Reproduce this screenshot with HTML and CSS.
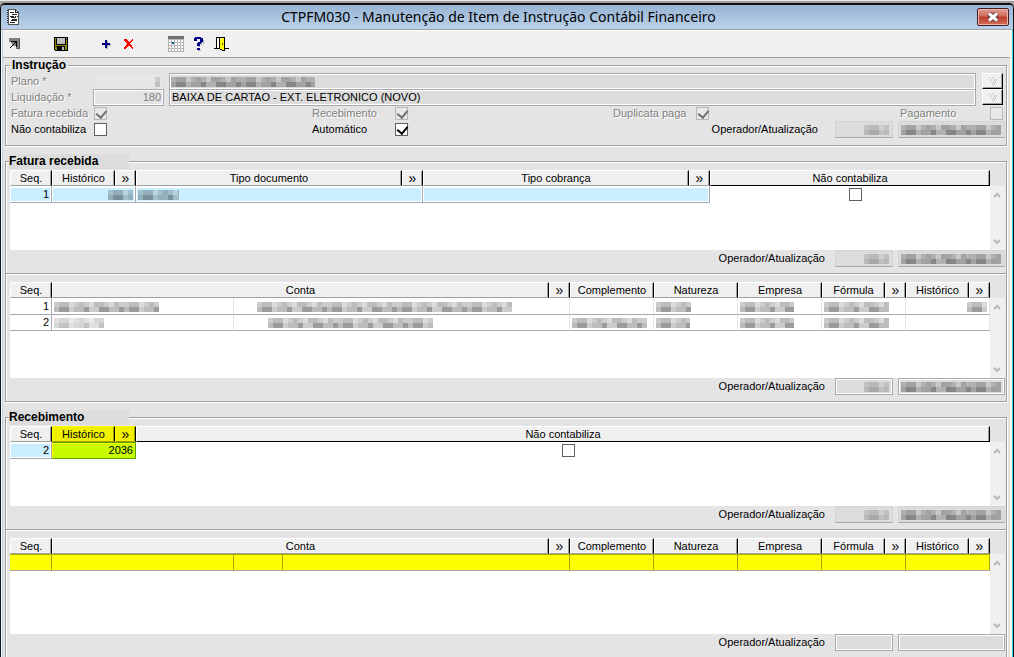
FILE: index.html
```html
<!DOCTYPE html>
<html lang="pt-BR">
<head>
    <meta charset="UTF-8">
    <meta name="viewport" content="width=device-width, initial-scale=1.0">
    <title>CTPFM030 - Manutenção de Item de Instrução Contábil Financeiro</title>
    <link rel="stylesheet" href="styles.css">
</head>
<body>
    <!-- Shared pixel pattern for hidden values -->
    <svg class="defs" width="0" height="0" aria-hidden="true">
        <defs>
            <pattern id="mosaic" width="70" height="10" patternUnits="userSpaceOnUse">
                <path fill="#000" fill-opacity=".2" d="M0 0h70v10h-70z"/>
                <path fill="#000" fill-opacity=".08" d="M5 0h10v5h-10zM25 0h5v5h-5zM40 0h10v5h-10zM60 0h5v5h-5zM0 5h5v5h-5zM20 5h10v5h-10zM55 5h10v5h-10z"/>
                <path fill="#000" fill-opacity=".24" d="M5 5h10v5h-10zM30 5h5v5h-5zM45 5h10v5h-10zM65 5h5v5h-5z"/>
                <path fill="#fff" fill-opacity=".3" d="M15 0h5v5h-5zM35 0h5v5h-5zM55 0h5v5h-5z"/>
            </pattern>
        </defs>
    </svg>

    <div class="window">
        <header class="titlebar">
            <svg class="app-icon" width="13" height="16" viewBox="0 0 13 16" shape-rendering="crispEdges">
                <path fill="#fff" stroke="#555" d="M1.500 .5h7l3 3v12h-10z"/>
                <path fill="none" stroke="#222" d="M8.500 .5v3h3M3 3.500h4M5 5.500h5M3 7.500h3M4 8.500h5M5 10.500h5M4 11.500h6M3 13.500h5"/>
                <path stroke="#333" stroke-dasharray="1 1" d="M.5 1v14M5 5h4M6 7.500h5"/>
            </svg>
            <h1>CTPFM030 - Manutenção de Item de Instrução Contábil Financeiro</h1>
            <button class="close" type="button" aria-label="Fechar">
                <svg width="12" height="10" viewBox="0 0 12 10">
                    <path fill="none" stroke="#5a3a3e" stroke-width="5" d="M2 1.500l8 7M10 1.500l-8 7"/>
                    <path fill="none" stroke="#fff" stroke-width="3" d="M2 1.500l8 7M10 1.500l-8 7"/>
                </svg>
            </button>
        </header>

        <nav class="toolbar">
            <button type="button" aria-label="Atalho">
                <svg width="12" height="12" viewBox="0 0 12 12" shape-rendering="crispEdges">
                    <path fill="#808080" d="M0 0h11v11h-11z"/>
                    <path fill="#f0f0f0" d="M0 4h2v1h1v3h4v3h-7z"/>
                    <path fill="#000" d="M2 3h6v6h-1v-4h-1v1h-1v1h-1v1h-1v1h-1v1h-1v-1h1v-1h1v-1h1v-1h1v-1h1v-1h-4z"/>
                    <path fill="#555" d="M10 1h1v10h-3v-1h2z"/>
                </svg>
            </button>
            <button type="button" aria-label="Salvar" class="after-wide">
                <svg width="14" height="14" viewBox="0 0 14 14" shape-rendering="crispEdges">
                    <path fill="#000" d="M0 0h14v14h-13l-1-1z"/>
                    <path fill="#8a8a00" d="M1 1h1v12h-1zM12 3h1v10h-1zM2 8h10v1h-10zM2 10h1v3h-1zM11 9h1v4h-1z"/>
                    <path fill="#c0c0c0" d="M3 1h8v6h-8zM8 10h2v3h-2zM12 1h1v1h-1z"/>
                </svg>
            </button>
            <button type="button" aria-label="Inserir" class="after-wide">
                <svg width="10" height="10" viewBox="0 0 10 10" shape-rendering="crispEdges">
                    <path fill="#aaa" d="M5 2h2v3h3v2h-3v3h-2z"/>
                    <path fill="#000080" d="M4 1h2v3h3v2h-3v3h-2v-3h-3v-2h3z"/>
                </svg>
            </button>
            <button type="button" aria-label="Excluir" class="after-small">
                <svg width="10" height="10" viewBox="0 0 10 10" shape-rendering="crispEdges">
                    <path fill="#f00" d="M0 0h2l3 3 3-3h1v1l-3 3.500 3 4v1h-1l-3-3.500-3 3.500h-2v-1l3-4-3-3.500z"/>
                </svg>
            </button>
            <button type="button" aria-label="Calendário" class="after-calendar">
                <svg width="16" height="16" viewBox="0 0 16 16" shape-rendering="crispEdges">
                    <path fill="#b4b4b4" d="M0 0h16v16h-16z"/>
                    <path fill="#707070" d="M0 0h16v3h-16z"/>
                    <path fill="none" stroke="#fff" stroke-width="2" stroke-dasharray="2 1" d="M1 5h14M1 8h14M1 11h14M1 14h14"/>
                    <path fill="#00609c" d="M4 6h2v2h-2z"/>
                </svg>
            </button>
            <button type="button" aria-label="Ajuda" class="after-help">
                <svg width="12" height="14" viewBox="0 0 12 14" shape-rendering="crispEdges">
                    <path fill="#aaa" d="M10 3h1v4h-2v2h-2v1h-2v-1h3v-2h2zM5 13h3v1h-3z"/>
                    <path fill="#000080" d="M2 0h6v1h2v4h-1v1h-1v1h-1v2h-3v-3h1v-1h2v-3h-3v2h-3v-3h1zM4 11h3v2h-3z"/>
                </svg>
            </button>
            <button type="button" aria-label="Sair" class="after-help">
                <svg width="15" height="14" viewBox="0 0 15 14" shape-rendering="crispEdges">
                    <path fill="#000" d="M2 0h9v11h4v1h-15v-1h2z"/>
                    <path fill="#fff" d="M3 1h2v10h-2z"/>
                    <path fill="#000" d="M5 1h6v13h-3v-1h-2v-1h-1z"/>
                    <path fill="#ff0" d="M6 1h4v12h-2v-1h-2z"/>
                    <path fill="#fff" d="M6 1h2v1h-2z"/>
                    <path fill="#555" d="M8 6h1v2h-1z"/>
                </svg>
            </button>
        </nav>

        <main>
            <section class="group instruction">
                <h2>Instrução</h2>
                <div class="lookup disabled">
                    <label for="plano">Plano *</label>
                    <span class="field code soft"><input id="plano" disabled><svg class="mosaic faint" width="5" height="10"><rect width="5" height="10" fill="url(#mosaic)"/></svg></span>
                    <span class="field grow"><input aria-label="Descrição do plano" readonly><svg class="mosaic left" width="144" height="10"><rect width="144" height="10" fill="url(#mosaic)"/></svg></span>
                    <button type="button" aria-label="Pesquisar plano" disabled><svg width="10" height="8"><path d="M1 1h1M4 1h1M3 3h1M6 3h1M8 3h1M5 5h1M7 5h1M4 7h1M6 7h1"/></svg></button>
                </div>
                <div class="lookup disabled">
                    <label for="liquidacao">Liquidação *</label>
                    <span class="field code"><input id="liquidacao" value="180" disabled></span>
                    <span class="field grow"><input aria-label="Descrição da liquidação" value="BAIXA DE CARTAO - EXT. ELETRONICO (NOVO)" readonly></span>
                    <button type="button" aria-label="Pesquisar liquidação" disabled><svg width="10" height="8"><path d="M1 1h1M4 1h1M3 3h1M6 3h1M8 3h1M5 5h1M7 5h1M4 7h1M6 7h1"/></svg></button>
                </div>
                <div class="options">
                    <label class="disabled" for="fatura">Fatura recebida</label>
                    <input type="checkbox" id="fatura" checked disabled>
                    <label class="disabled" for="receb">Recebimento</label>
                    <input type="checkbox" id="receb" checked disabled>
                    <label class="disabled" for="duplicata">Duplicata paga</label>
                    <input type="checkbox" id="duplicata" checked disabled>
                    <label class="disabled" for="pagamento">Pagamento</label>
                    <input type="checkbox" id="pagamento" disabled>

                    <label for="naocontab">Não contabiliza</label>
                    <input type="checkbox" id="naocontab">
                    <label for="automatico">Automático</label>
                    <input type="checkbox" id="automatico" checked>
                    <div class="audit wide">
                        <label for="op0">Operador/Atualização</label>
                        <span class="field operator masked"><input id="op0" readonly><svg class="mosaic faint" width="25" height="10"><rect width="25" height="10" fill="url(#mosaic)"/></svg></span>
                        <span class="field date masked"><input aria-label="Data" readonly><svg class="mosaic" width="100" height="10"><rect width="100" height="10" fill="url(#mosaic)"/></svg></span>
                    </div>
                </div>
            </section>

            <section class="group">
                <h2 class="shaded">Fatura recebida</h2>
                <div class="grid short">
                    <div class="sheet">
                        <table>
                            <colgroup><col class="seq"><col class="name"><col class="more"><col class="type"><col class="more"><col class="type"><col class="more"><col></colgroup>
                            <thead>
                                <tr>
                                    <th>Seq.</th><th>Histórico</th><th><button type="button">»</button></th><th>Tipo documento</th><th><button type="button">»</button></th><th>Tipo cobrança</th><th><button type="button">»</button></th><th class="edge">Não contabiliza</th>
                                </tr>
                            </thead>
                            <tbody>
                                <tr class="current">
                                    <td class="num">1</td>
                                    <td class="num" colspan="2"><svg class="blur" width="25" height="10"><rect width="25" height="10" fill="url(#mosaic)"/></svg></td>
                                    <td colspan="2"><svg class="blur" width="41" height="10"><rect width="41" height="10" fill="url(#mosaic)"/></svg></td>
                                    <td colspan="2"></td>
                                    <td class="check"><input type="checkbox" aria-label="Não contabiliza"></td>
                                </tr>
                            </tbody>
                        </table>
                    </div>
                    <div class="scroll"><svg width="9" height="6"><path d="M1 5l3-3 3 3"/></svg><svg width="9" height="6"><path d="M1 1l3 3 3-3"/></svg></div>
                </div>
                <div class="audit">
                    <label for="op1">Operador/Atualização</label>
                    <span class="field operator masked"><input id="op1" readonly><svg class="mosaic faint" width="25" height="10"><rect width="25" height="10" fill="url(#mosaic)"/></svg></span>
                    <span class="field date masked"><input aria-label="Data" readonly><svg class="mosaic" width="100" height="10"><rect width="100" height="10" fill="url(#mosaic)"/></svg></span>
                </div>
                <hr>
                <div class="grid">
                    <div class="sheet">
                        <table>
                            <colgroup><col class="seq"><col class="account"><col class="digit"><col><col class="more"><col class="mid"><col class="mid"><col class="mid"><col class="name"><col class="more"><col class="name"><col class="more"></colgroup>
                            <thead>
                                <tr>
                                    <th>Seq.</th><th colspan="3">Conta</th><th><button type="button">»</button></th><th>Complemento</th><th>Natureza</th><th>Empresa</th><th>Fórmula</th><th><button type="button">»</button></th><th>Histórico</th><th><button type="button">»</button></th>
                                </tr>
                            </thead>
                            <tbody>
                                <tr class="hidden-values">
                                    <td class="num">1</td>
                                    <td><svg class="blur" width="105" height="10"><rect width="105" height="10" fill="url(#mosaic)"/></svg></td>
                                    <td colspan="3" class="indent"><svg class="blur" width="255" height="10"><rect width="255" height="10" fill="url(#mosaic)"/></svg></td>
                                    <td></td>
                                    <td><svg class="blur" width="35" height="10"><rect width="35" height="10" fill="url(#mosaic)"/></svg></td>
                                    <td><svg class="blur" width="54" height="10"><rect width="54" height="10" fill="url(#mosaic)"/></svg></td>
                                    <td colspan="2"><svg class="blur" width="65" height="10"><rect width="65" height="10" fill="url(#mosaic)"/></svg></td>
                                    <td colspan="2" class="num"><svg class="blur" width="20" height="10"><rect width="20" height="10" fill="url(#mosaic)"/></svg></td>
                                </tr>
                                <tr class="hidden-values">
                                    <td class="num">2</td>
                                    <td><svg class="blur faint" width="50" height="10"><rect width="50" height="10" fill="url(#mosaic)"/></svg></td>
                                    <td colspan="3" class="indent deep"><svg class="blur" width="165" height="10"><rect width="165" height="10" fill="url(#mosaic)"/></svg></td>
                                    <td><svg class="blur" width="75" height="10"><rect width="75" height="10" fill="url(#mosaic)"/></svg></td>
                                    <td><svg class="blur" width="34" height="10"><rect width="34" height="10" fill="url(#mosaic)"/></svg></td>
                                    <td><svg class="blur" width="54" height="10"><rect width="54" height="10" fill="url(#mosaic)"/></svg></td>
                                    <td colspan="2"><svg class="blur" width="65" height="10"><rect width="65" height="10" fill="url(#mosaic)"/></svg></td>
                                    <td colspan="2"></td>
                                </tr>
                            </tbody>
                        </table>
                    </div>
                    <div class="scroll"><svg width="9" height="6"><path d="M1 5l3-3 3 3"/></svg><svg width="9" height="6"><path d="M1 1l3 3 3-3"/></svg></div>
                </div>
                <div class="audit">
                    <label for="op2">Operador/Atualização</label>
                    <span class="field operator"><input id="op2" readonly><svg class="mosaic faint" width="25" height="10"><rect width="25" height="10" fill="url(#mosaic)"/></svg></span>
                    <span class="field date"><input aria-label="Data" readonly><svg class="mosaic" width="100" height="10"><rect width="100" height="10" fill="url(#mosaic)"/></svg></span>
                </div>
            </section>

            <section class="group">
                <h2 class="shaded">Recebimento</h2>
                <div class="grid short">
                    <div class="sheet">
                        <table>
                            <colgroup><col class="seq"><col class="name"><col class="more"><col></colgroup>
                            <thead>
                                <tr>
                                    <th>Seq.</th><th class="marked">Histórico</th><th class="marked"><button type="button">»</button></th><th class="edge">Não contabiliza</th>
                                </tr>
                            </thead>
                            <tbody>
                                <tr class="current">
                                    <td class="num">2</td>
                                    <td class="num focus" colspan="2">2036</td>
                                    <td class="check"><input type="checkbox" aria-label="Não contabiliza"></td>
                                </tr>
                            </tbody>
                        </table>
                    </div>
                    <div class="scroll"><svg width="9" height="6"><path d="M1 5l3-3 3 3"/></svg><svg width="9" height="6"><path d="M1 1l3 3 3-3"/></svg></div>
                </div>
                <div class="audit">
                    <label for="op3">Operador/Atualização</label>
                    <span class="field operator masked"><input id="op3" readonly><svg class="mosaic faint" width="25" height="10"><rect width="25" height="10" fill="url(#mosaic)"/></svg></span>
                    <span class="field date masked"><input aria-label="Data" readonly><svg class="mosaic" width="100" height="10"><rect width="100" height="10" fill="url(#mosaic)"/></svg></span>
                </div>
                <hr>
                <div class="grid">
                    <div class="sheet">
                        <table>
                            <colgroup><col class="seq"><col class="account"><col class="digit"><col><col class="more"><col class="mid"><col class="mid"><col class="mid"><col class="name"><col class="more"><col class="name"><col class="more"></colgroup>
                            <thead>
                                <tr>
                                    <th>Seq.</th><th colspan="3">Conta</th><th><button type="button">»</button></th><th>Complemento</th><th>Natureza</th><th>Empresa</th><th>Fórmula</th><th><button type="button">»</button></th><th>Histórico</th><th><button type="button">»</button></th>
                                </tr>
                            </thead>
                            <tbody>
                                <tr class="highlight">
                                    <td></td><td></td><td></td><td colspan="2"></td><td></td><td></td><td></td><td colspan="2"></td><td colspan="2"></td>
                                </tr>
                            </tbody>
                        </table>
                    </div>
                    <div class="scroll"><svg width="9" height="6"><path d="M1 5l3-3 3 3"/></svg><svg width="9" height="6"><path d="M1 1l3 3 3-3"/></svg></div>
                </div>
                <div class="audit">
                    <label for="op4">Operador/Atualização</label>
                    <span class="field operator"><input id="op4" readonly></span>
                    <span class="field date"><input aria-label="Data" readonly></span>
                </div>
            </section>
        </main>
    </div>
</body>
</html>
```

FILE: styles.css
```css
* {
    margin: 0;
    padding: 0;
    box-sizing: border-box;
}

body {
    height: 100vh;
    overflow: hidden;
    border-top: 1px solid #e8e8e8;
    background: #a0a0a0;
    font-family: "Liberation Sans", Arial, sans-serif;
    font-size: 11px;
    line-height: 16px;
    color: #000;
}

.defs {
    position: absolute;
}

button {
    border: none;
    background: none;
    font: inherit;
}

/* Window frame */
.window {
    height: 100%;
    margin-top: 2px;
    overflow: hidden;
    background: #e4e4e4;
    border: 1px solid #111;
    border-top-width: 2px;
    border-radius: 5px 5px 0 0;
    box-shadow: inset 1px 0 #fff, inset 2px 0 #b9d1ea, inset -1px 0 #3cd0f0, inset -3px 0 #f4f4f4;
}

.titlebar {
    display: flex;
    align-items: center;
    height: 25px;
    padding: 0 4px 0 6px;
    background: linear-gradient(#98b4d2, #b9d1ea);
    border-bottom: 1px solid #a0a0a0;
}

.titlebar h1 {
    flex: 1;
    text-align: center;
    font-family: "Noto Sans", "Open Sans", sans-serif;
    font-size: 14px;
    font-weight: 400;
    line-height: 24px;
    white-space: nowrap;
}

.close {
    display: flex;
    align-items: center;
    justify-content: center;
    width: 32px;
    height: 18px;
    border: 1px solid #4c1c20;
    border-radius: 2px;
    background: linear-gradient(#e0a095, #cf6a58 45%, #b83a25 50%, #d4705c);
    box-shadow: inset 0 0 0 1px #e8b8b0;
}

.toolbar {
    display: flex;
    align-items: center;
    height: 28px;
    margin: 0 3px 0 2px;
    padding-left: 6px;
    background: #f0f0f0;
    border-top: 1px solid #fff;
    border-bottom: 1px solid #a0a0a0;
}

.toolbar button {
    display: flex;
}

.after-wide {
    margin-left: 33px;
}

.after-small {
    margin-left: 13px;
}

.after-calendar {
    margin-left: 34px;
}

.after-help {
    margin-left: 9px;
}

main {
    padding: 7px 6px 0 4px;
}

/* Group boxes */
.group {
    position: relative;
    margin-bottom: 15px;
    padding: 8px 1px 7px 4px;
    border: 1px solid #a0a0a0;
    box-shadow: 1px 1px 0 #fff, inset 1px 1px 0 #fff;
}

.group h2 {
    position: absolute;
    top: -8px;
    left: 4px;
    padding: 0 2px;
    background: #e4e4e4;
    font-size: 12px;
    line-height: 15px;
}

.group h2.shaded {
    width: 120px;
    padding: 0;
    left: 3px;
    background: #dcdcdc;
}

.group hr {
    margin: 7px -1px 7px -4px;
    border: none;
    border-top: 1px solid #a0a0a0;
    border-bottom: 1px solid #fff;
}

.group.instruction {
    padding: 7px 1px 8px 5px;
}

.disabled {
    color: #808080;
    text-shadow: 1px 1px 0 #fff;
}

.lookup {
    display: flex;
    align-items: center;
    height: 16px;
}

.lookup label {
    width: 82px;
}

.lookup button {
    display: flex;
    align-items: center;
    justify-content: center;
    width: 21px;
    height: 16px;
    margin-left: 6px;
    margin-right: 2px;
    background: #f0f0f0;
    border: 1px solid #fff;
    border-right-color: #000;
    border-bottom-color: #000;
    box-shadow: inset -1px -1px #a0a0a0;
}

.lookup button path {
    stroke: #a0a0a0;
}

.field {
    position: relative;
    display: block;
    height: 17px;
    background: #dcdcdc;
    border: 1px solid #a8a8b0;
    box-shadow: inset 0 0 0 1px #fff;
}

.field input {
    display: block;
    width: 100%;
    height: 15px;
    padding: 0 2px;
    border: none;
    outline: none;
    background: none;
    font: inherit;
    color: #000;
}

.field.code {
    width: 71px;
    margin-right: 5px;
    background: #e4e4e4;
}

.field.code input {
    text-align: right;
    color: #808080;
}

.field.soft {
    border-color: #e0e0e0;
    box-shadow: none;
    background: #e6e6e6;
}

.field.masked {
    border-color: #d4d4d8;
    border-bottom-color: #a8a8b0;
    box-shadow: none;
}

.field.grow {
    flex: 1;
}

.mosaic {
    position: absolute;
    right: 3px;
    top: 3px;
}

.mosaic.left {
    right: auto;
    left: 1px;
}

.faint {
    opacity: .6;
}

.options {
    display: grid;
    grid-template-columns: 83px 218fr 83px 218fr 83px 204fr 90px 15px;
    grid-auto-rows: 16px;
    align-items: center;
}

input[type="checkbox"] {
    appearance: none;
    display: block;
    width: 13px;
    height: 13px;
    background: #fff;
    border: 1px solid #606060;
}

input[type="checkbox"]:disabled {
    background: #e8e8e8;
    border-color: #b8b8b8;
}

input[type="checkbox"]:checked::before {
    content: "";
    display: block;
    width: 5px;
    height: 8px;
    margin: 0 0 0 3px;
    border: solid #000;
    border-width: 0 2px 2px 0;
    transform: rotate(40deg);
}

input[type="checkbox"]:checked:disabled::before {
    border-color: #707070;
}

.audit {
    display: flex;
    justify-content: flex-end;
    gap: 5px;
    height: 16px;
}

.audit label {
    margin-right: 5px;
}

.audit.wide {
    grid-column: 5 / -1;
}

.audit.wide label {
    margin-right: 12px;
}

.operator {
    width: 58px;
}

.date {
    width: 107px;
}

/* Data grids */
.grid {
    display: flex;
    height: 96px;
}

.grid.short {
    height: 80px;
}

.sheet {
    flex: 1;
    background: #fff;
}

.scroll {
    display: flex;
    flex-direction: column;
    justify-content: space-between;
    align-items: center;
    width: 15px;
    margin-top: 16px;
    padding: 6px 0 5px;
    background: #f0f0f0;
}

.scroll path {
    fill: none;
    stroke: #b8b8b8;
    stroke-width: 2;
}

table {
    width: 100%;
    table-layout: fixed;
    border-collapse: separate;
    border-spacing: 0;
}

.seq {
    width: 42px;
}

.name {
    width: 63px;
}

.more {
    width: 21px;
}

.type {
    width: 266px;
}

.mid {
    width: 84px;
}

.account {
    width: 182px;
}

.digit {
    width: 49px;
}

th {
    height: 16px;
    background: #f0f0f0;
    border: 1px solid #fff;
    border-right-color: #000;
    border-bottom-color: #a0a0a0;
    box-shadow: inset -1px 0 #a0a0a0;
    font-weight: 400;
    line-height: 14px;
}

th button {
    display: block;
    width: 100%;
    font-size: 14px;
    line-height: 12px;
}

th.edge {
    border-bottom-color: #000;
}

th.marked {
    background: #f0f000;
    border-color: #ff0 #000 #a0a000 #ff0;
    box-shadow: inset -1px 0 #a0a000;
}

td {
    height: 16px;
    padding: 0 2px;
    border-right: 1px solid #a8a8b0;
    border-bottom: 1px solid #a8a8b0;
    line-height: 15px;
    white-space: nowrap;
}

tbody tr:first-child td {
    height: 17px;
    border-top: 1px solid #fff;
}

.num {
    text-align: right;
}

.blur {
    display: inline-block;
    vertical-align: middle;
}

.indent {
    padding-left: 23px;
}

.indent.deep {
    padding-left: 34px;
}

.current td {
    background: #c8eeff;
    box-shadow: inset 0 0 0 1px #fff;
}

.current td.check {
    padding-left: 14px;
    background: none;
    border-color: #fff;
    box-shadow: none;
}

.check input {
    margin: 0 auto;
}

.current td.focus {
    background: #c8fa00;
    border-color: #58a000;
    box-shadow: inset 1px 1px #ff0;
}

.hidden-values td {
    border-right-color: #e4e4e8;
}

.hidden-values td:first-child {
    border-right-color: #a8a8b0;
}

.highlight td {
    background: #ff0;
    border-color: #a8a800;
    border-bottom-color: #a8a8a0;
}

tbody tr.highlight:first-child td {
    border-top-color: #a8a800;
}
```
